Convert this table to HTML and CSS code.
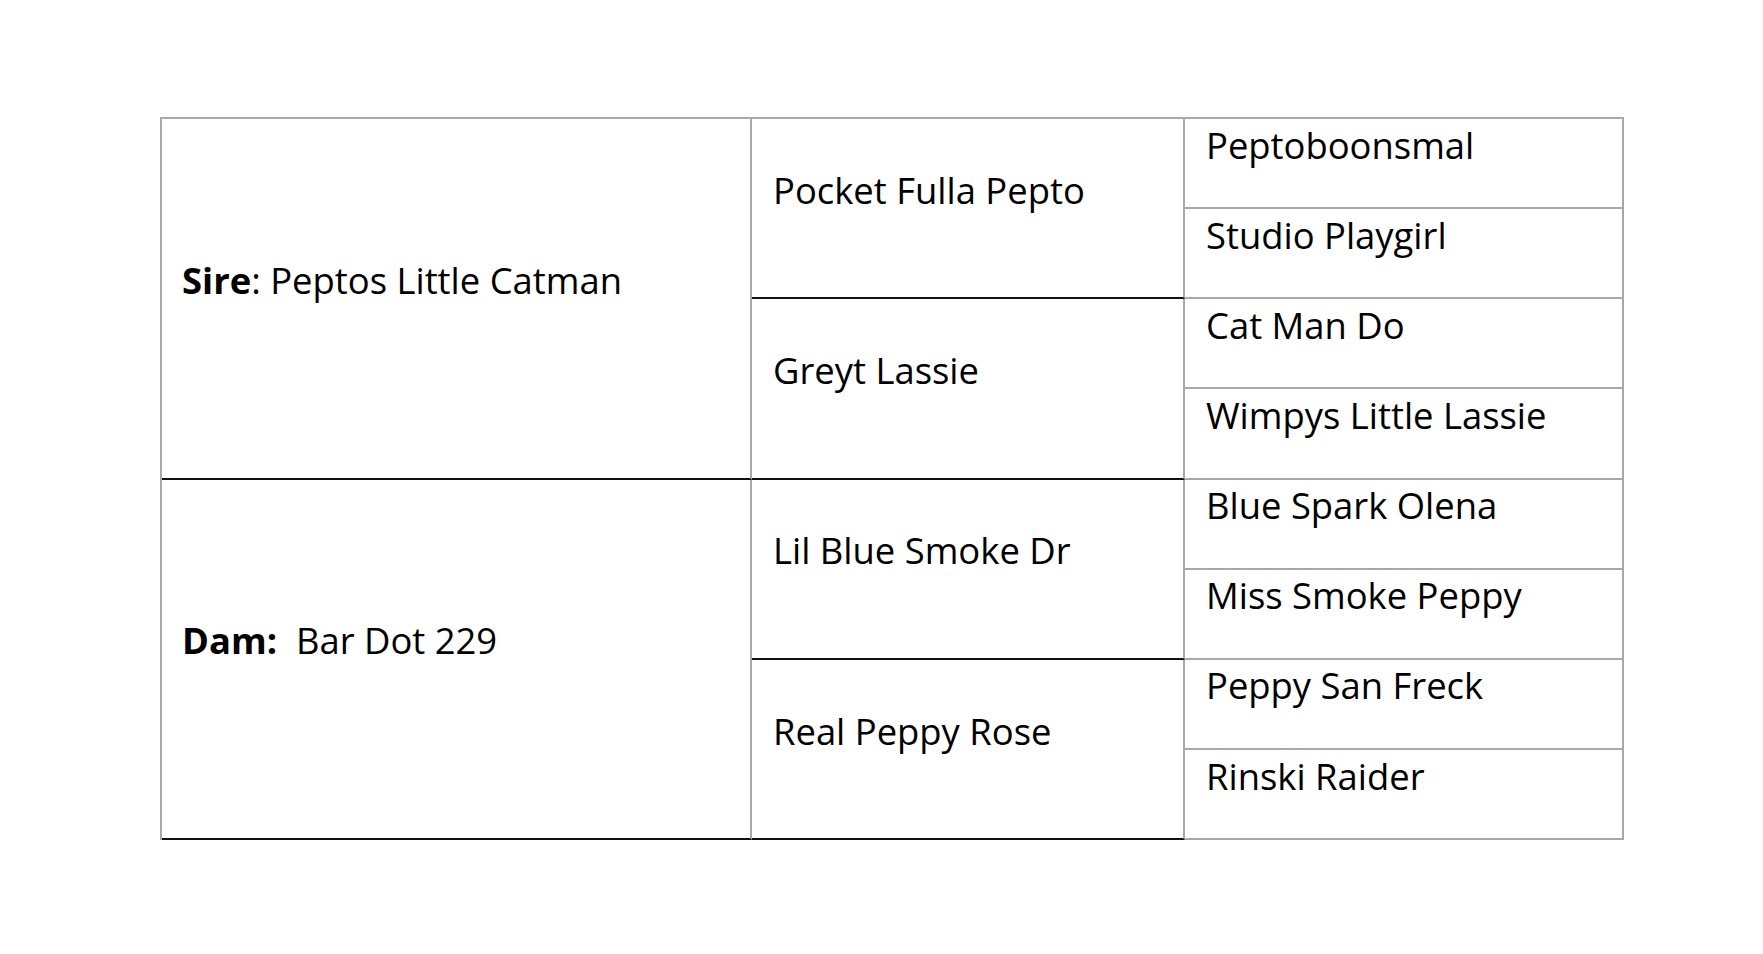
FILE: index.html
```html
<!DOCTYPE html>
<html lang="en">
<head>
<meta charset="utf-8">
<title>Pedigree</title>
<link rel="stylesheet" href="styles.css">
</head>
<body>
<div class="pedigree">
  <div class="cell c1 r-sire"><span><b>Sire</b>: Peptos Little Catman</span></div>
  <div class="cell c2 r-a">Pocket Fulla Pepto</div>
  <div class="cell c3 r1">Peptoboonsmal</div>
  <div class="cell c3 r2">Studio Playgirl</div>
  <div class="cell c2 r-b">Greyt Lassie</div>
  <div class="cell c3 r3">Cat Man Do</div>
  <div class="cell c3 r4">Wimpys Little Lassie</div>
  <div class="cell c1 r-dam"><span><b>Dam:</b>&nbsp; Bar Dot 229</span></div>
  <div class="cell c2 r-c">Lil Blue Smoke Dr</div>
  <div class="cell c3 r5">Blue Spark Olena</div>
  <div class="cell c3 r6">Miss Smoke Peppy</div>
  <div class="cell c2 r-d">Real Peppy Rose</div>
  <div class="cell c3 r7">Peppy San Freck</div>
  <div class="cell c3 r8">Rinski Raider</div>
</div>
</body>
</html>
```

FILE: styles.css
```css
html, body {
  margin: 0;
  padding: 0;
  background: #ffffff;
}

body {
  font-family: "Open Sans", "Liberation Sans", sans-serif;
  color: #000;
}

.pedigree {
  margin: 117px 0 0 160px;
  width: 1462px;
  height: 721px;
  display: grid;
  grid-template-columns: 590px 433px 439px;
  grid-template-rows: repeat(8, 1fr);
  border-top: 2px solid #a8a8a8;
  border-left: 2px solid #a8a8a8;
}

.cell {
  display: flex;
  flex-direction: column;
  justify-content: center;
  padding: 0 20px 35px 20px;
  font-size: 36.4px;
  line-height: 1.2;
  border-right: 2px solid #a8a8a8;
  border-bottom: 2px solid #a8a8a8;
  white-space: nowrap;
}

.cell b {
  font-weight: 700;
}

.c1 { grid-column: 1; border-bottom-color: #111; }
.c2 { grid-column: 2; border-bottom-color: #111; padding-left: 21px; }
.c3 { grid-column: 3; padding-left: 21px; }

.r-sire { grid-row: 1 / 5; }
.r-dam { grid-row: 5 / 9; }

.r-a { grid-row: 1 / 3; }
.r-b { grid-row: 3 / 5; }
.r-c { grid-row: 5 / 7; }
.r-d { grid-row: 7 / 9; }

.r1 { grid-row: 1; }
.r2 { grid-row: 2; }
.r3 { grid-row: 3; }
.r4 { grid-row: 4; }
.r5 { grid-row: 5; }
.r6 { grid-row: 6; }
.r7 { grid-row: 7; }
.r8 { grid-row: 8; }
```
